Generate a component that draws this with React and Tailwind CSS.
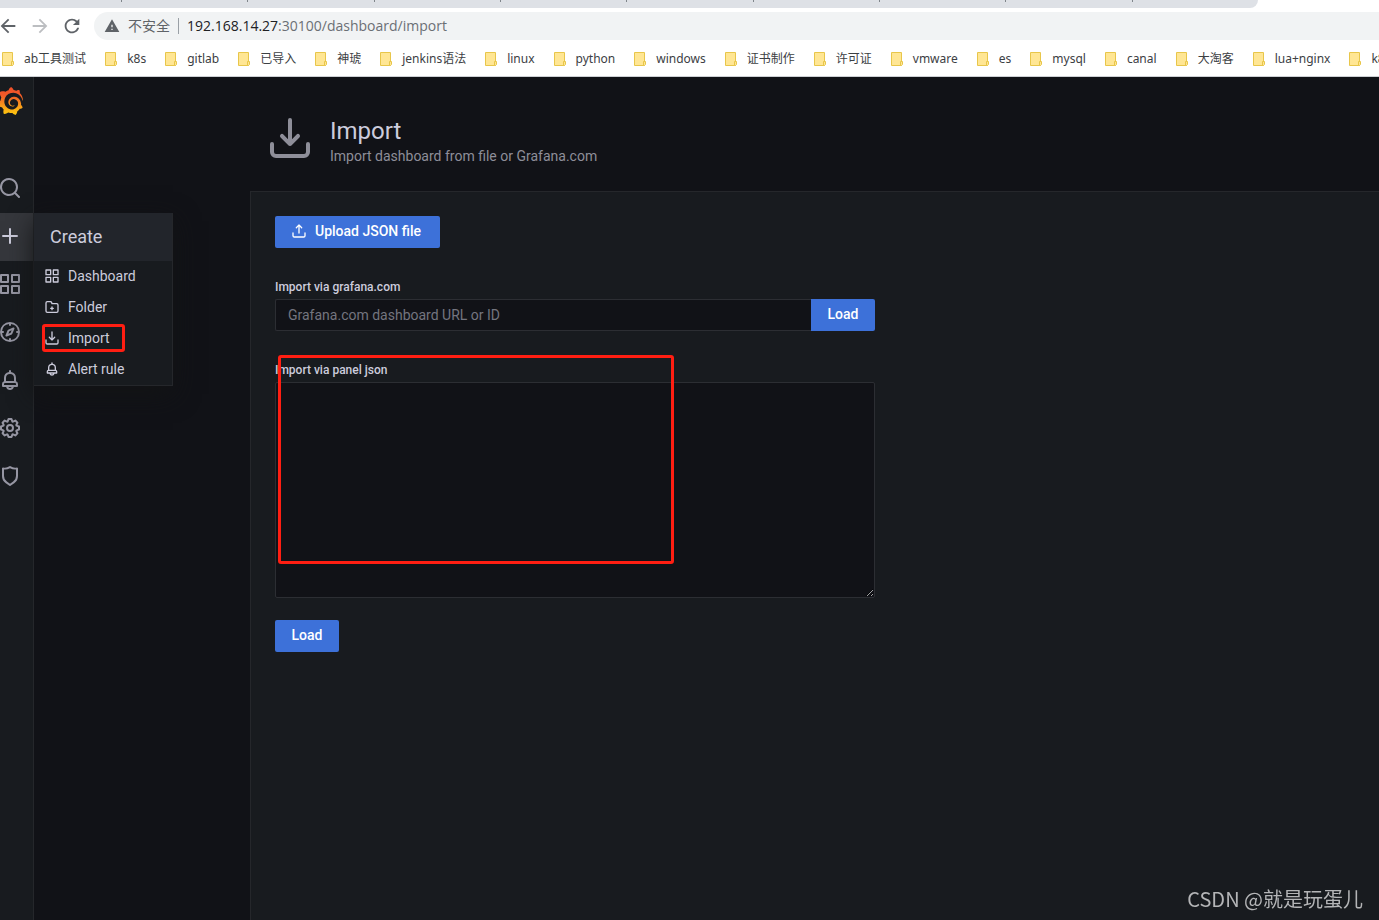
import React from 'react';
import { SiGrafana } from 'react-icons/si';
import { MdArrowBack, MdArrowForward, MdRefresh, MdWarning } from 'react-icons/md';

const paths = {
    search: 'M21.71,20.29,18,16.61A9,9,0,1,0,16.61,18l3.68,3.68a1,1,0,0,0,1.42,0A1,1,0,0,0,21.71,20.29ZM11,18a7,7,0,1,1,7-7A7,7,0,0,1,11,18Z',
    plus: 'M19,11H13V5a1,1,0,0,0-2,0v6H5a1,1,0,0,0,0,2h6v6a1,1,0,0,0,2,0V13h6a1,1,0,0,0,0-2Z',
    apps: 'M10,13H3a1,1,0,0,0-1,1v7a1,1,0,0,0,1,1h7a1,1,0,0,0,1-1V14A1,1,0,0,0,10,13ZM9,20H4V15H9ZM21,2H14a1,1,0,0,0-1,1v7a1,1,0,0,0,1,1h7a1,1,0,0,0,1-1V3A1,1,0,0,0,21,2ZM20,9H15V4h5Zm1,4H14a1,1,0,0,0-1,1v7a1,1,0,0,0,1,1h7a1,1,0,0,0,1-1V14A1,1,0,0,0,21,13Zm-1,7H15V15h5ZM10,2H3A1,1,0,0,0,2,3v7a1,1,0,0,0,1,1h7a1,1,0,0,0,1-1V3A1,1,0,0,0,10,2ZM9,9H4V4H9Z',
    compass: 'M12,2A10,10,0,1,0,22,12,10,10,0,0,0,12,2Zm1,17.93V19a1,1,0,0,0-2,0v.93A8,8,0,0,1,4.07,13H5a1,1,0,0,0,0-2H4.07A8,8,0,0,1,11,4.07V5a1,1,0,0,0,2,0V4.07A8,8,0,0,1,19.93,11H19a1,1,0,0,0,0,2h.93A8,8,0,0,1,13,19.93ZM15.14,7.55l-5,2.12a1,1,0,0,0-.52.52l-2.12,5a1,1,0,0,0,.21,1.1,1,1,0,0,0,.7.3.93.93,0,0,0,.4-.09l5-2.12a1,1,0,0,0,.52-.52l2.12-5a1,1,0,0,0-1.31-1.31Zm-2.49,5.1-2.28,1,1-2.28,2.28-1Z',
    bell: 'M18,13.18V10a6,6,0,0,0-5-5.91V3a1,1,0,0,0-2,0V4.09A6,6,0,0,0,6,10v3.18A3,3,0,0,0,4,16v2a1,1,0,0,0,1,1H8.14a4,4,0,0,0,7.72,0H19a1,1,0,0,0,1-1V16A3,3,0,0,0,18,13.18ZM8,10a4,4,0,0,1,8,0v3H8Zm4,10a2,2,0,0,1-1.72-1h3.44A2,2,0,0,1,12,20Zm6-3H6V16a1,1,0,0,1,1-1H17a1,1,0,0,1,1,1Z',
    cog: 'M21.32,9.55l-1.89-.63.89-1.78A1,1,0,0,0,20.13,6L18,3.87a1,1,0,0,0-1.15-.19l-1.78.89-.63-1.89A1,1,0,0,0,13.5,2h-3a1,1,0,0,0-.95.68L8.92,4.57,7.14,3.68A1,1,0,0,0,6,3.87L3.87,6a1,1,0,0,0-.19,1.15l.89,1.78-1.89.63A1,1,0,0,0,2,10.5v3a1,1,0,0,0,.68.95l1.89.63-.89,1.78A1,1,0,0,0,3.87,18L6,20.13a1,1,0,0,0,1.15.19l1.78-.89.63,1.89a1,1,0,0,0,.95.68h3a1,1,0,0,0,.95-.68l.63-1.89,1.78.89A1,1,0,0,0,18,20.13L20.13,18a1,1,0,0,0,.19-1.15l-.89-1.78,1.89-.63A1,1,0,0,0,22,13.5v-3A1,1,0,0,0,21.32,9.55ZM20,12.78l-1.2.4A2,2,0,0,0,17.64,16l.57,1.14-1.1,1.1L16,17.64a2,2,0,0,0-2.79,1.16l-.4,1.2H11.22l-.4-1.2A2,2,0,0,0,8,17.64l-1.14.57-1.1-1.1L6.36,16A2,2,0,0,0,5.2,13.18L4,12.78V11.22l1.2-.4A2,2,0,0,0,6.36,8L5.79,6.89l1.1-1.1L8,6.36A2,2,0,0,0,10.82,5.2l.4-1.2h1.56l.4,1.2A2,2,0,0,0,16,6.36l1.14-.57,1.1,1.1L17.64,8a2,2,0,0,0,1.16,2.79l1.2.4ZM12,8a4,4,0,1,0,4,4A4,4,0,0,0,12,8Zm0,6a2,2,0,1,1,2-2A2,2,0,0,1,12,14Z',
    shield: 'M19.63,3.65a1,1,0,0,0-.84-.2,8,8,0,0,1-6.22-1.27,1,1,0,0,0-1.14,0A8,8,0,0,1,5.21,3.45a1,1,0,0,0-.84.2A1,1,0,0,0,4,4.43v7.45a9,9,0,0,0,3.77,7.33l3.65,2.6a1,1,0,0,0,1.16,0l3.65-2.6A9,9,0,0,0,20,11.88V4.43A1,1,0,0,0,19.63,3.65ZM18,11.88a7,7,0,0,1-2.93,5.7L12,19.77,8.93,17.58A7,7,0,0,1,6,11.88V5.58a10,10,0,0,0,6-1.39,10,10,0,0,0,6,1.39Z',
    folder: 'M14,13H13V12a1,1,0,0,0-2,0v1H10a1,1,0,0,0,0,2h1v1a1,1,0,0,0,2,0V15h1a1,1,0,0,0,0-2Zm5-7H12.72l-.32-1a3,3,0,0,0-2.84-2H5A3,3,0,0,0,2,6V18a3,3,0,0,0,3,3H19a3,3,0,0,0,3-3V9A3,3,0,0,0,19,6Zm1,12a1,1,0,0,1-1,1H5a1,1,0,0,1-1-1V6A1,1,0,0,1,5,5H9.56a1,1,0,0,1,.95.68l.54,1.64A1,1,0,0,0,12,8h7a1,1,0,0,1,1,1Z',
    import: 'M21,14a1,1,0,0,0-1,1v4a1,1,0,0,1-1,1H5a1,1,0,0,1-1-1V15a1,1,0,0,0-2,0v4a3,3,0,0,0,3,3H19a3,3,0,0,0,3-3V15A1,1,0,0,0,21,14Zm-9.71,1.71a1,1,0,0,0,.33.21.94.94,0,0,0,.76,0,1,1,0,0,0,.33-.21l4-4a1,1,0,0,0-1.42-1.42L13,12.59V3a1,1,0,0,0-2,0v9.59l-2.29-2.3a1,1,0,1,0-1.42,1.42Z',
    upload: 'M8.71,7.71,11,5.41V15a1,1,0,0,0,2,0V5.41l2.29,2.3a1,1,0,0,0,1.42,0,1,1,0,0,0,0-1.42l-4-4a1,1,0,0,0-.33-.21,1,1,0,0,0-.76,0,1,1,0,0,0-.33.21l-4,4A1,1,0,1,0,8.71,7.71ZM21,14a1,1,0,0,0-1,1v4a1,1,0,0,1-1,1H5a1,1,0,0,1-1-1V15a1,1,0,0,0-2,0v4a3,3,0,0,0,3,3H19a3,3,0,0,0,3-3V15A1,1,0,0,0,21,14Z',
};

const Icon = ({ name, size = 24 }) => (
    <svg width={size} height={size} viewBox="0 0 24 24" fill="currentColor" className="shrink-0" aria-hidden="true">
        <path d={paths[name]} />
    </svg>
);

const bookmarks = [
    'ab工具测试', 'k8s', 'gitlab', '已导入', '神琥', 'jenkins语法', 'linux', 'python', 'windows',
    '证书制作', '许可证', 'vmware', 'es', 'mysql', 'canal', '大淘客', 'lua+nginx', 'k8s',
];

const createItems = [
    { icon: 'apps', label: 'Dashboard' },
    { icon: 'folder', label: 'Folder' },
    { icon: 'import', label: 'Import', marked: true },
    { icon: 'bell', label: 'Alert rule' },
];

const BookmarkFolder = () => (
    <svg width="12" height="14" viewBox="0 0 12 14" className="shrink-0" aria-hidden="true">
        <path d="M.5.5h10v13H.5z" fill="#ffe694" stroke="#e8c64a" />
        <path d="M9.5 9.5h2v3l-1 1h-1z" fill="#ffe694" stroke="#e8c64a" />
    </svg>
);

const BrowserBar = () => (
    <header className="h-[77px] overflow-hidden bg-white border-b border-[#cdd0d4] font-['Open_Sans','Noto_Sans_CJK_SC',sans-serif]">
        <div className="flex h-2 w-[1258px] rounded-br-lg bg-[#dee1e6]">
            <span className="h-[2px] w-[122px] border-r border-[#80868b]" />
            {[1, 2, 3, 4, 5, 6, 7, 8].map((tab) => (
                <span key={tab} className="h-[2px] flex-1 border-r border-[#80868b]" />
            ))}
            <span className="flex-1" />
        </div>
        <div className="flex h-9 items-center">
            <div className="flex w-[94px] shrink-0 items-center gap-[10px] text-[#5f6368]">
                <button type="button" aria-label="Back" className="-ml-[3px]"><MdArrowBack size={22} /></button>
                <button type="button" aria-label="Forward" className="text-[#bcbec1]"><MdArrowForward size={22} /></button>
                <button type="button" aria-label="Reload"><MdRefresh size={22} /></button>
            </div>
            <div className="flex h-7 flex-1 items-center rounded-l-full bg-[#f1f3f4] pl-[10px] text-[#5f6368]">
                <MdWarning size={16} />
                <span className="ml-2 text-sm whitespace-nowrap">不安全</span>
                <span className="mx-2 h-4 w-px shrink-0 bg-[#9aa0a6]" />
                <span className="text-sm whitespace-nowrap text-[#6b6f74]">
                    <span className="text-[#202124]">192.168.14.27</span>:30100/dashboard/import
                </span>
            </div>
        </div>
        <nav className="flex h-[29px] items-center gap-[19px] pl-[2px] font-['Noto_Sans','Noto_Sans_CJK_SC',sans-serif] text-xs text-[#3c4043]">
            {bookmarks.map((name, i) => (
                <a key={i} href="#" className="flex shrink-0 items-center gap-[10px] whitespace-nowrap">
                    <BookmarkFolder />
                    {name}
                </a>
            ))}
        </nav>
    </header>
);

const CreateMenu = () => (
    <div className="absolute left-[34px] top-0 z-10 w-[139px] border-r border-b border-[#25272b] bg-[#181b1f] text-[#ccccdc] shadow-[0_8px_24px_#131415]">
        <div className="flex h-12 items-center bg-[#22252b] px-4 text-lg">Create</div>
        <ul>
            {createItems.map((item) => (
                <li key={item.label} className="relative">
                    <a href="#" className="flex h-[31px] items-center gap-2 pb-[2px] pl-[10px] text-sm">
                        <Icon name={item.icon} size={16} />
                        {item.label}
                    </a>
                    {item.marked && (
                        <span className="pointer-events-none absolute top-[1px] left-2 h-7 w-[83px] rounded-[3px] border-3 border-[#ff1e12]" />
                    )}
                </li>
            ))}
        </ul>
    </div>
);

const SideButton = ({ name, label }) => (
    <button type="button" aria-label={label} className="flex h-12 w-5 items-center justify-center pb-[2px]">
        <Icon name={name} />
    </button>
);

const Sidebar = () => (
    <aside className="w-[34px] shrink-0 border-r border-[#25272b] bg-[#181b1f] text-[#9696a3]">
        <a href="#" aria-label="Home" className="mb-10 flex h-12 w-5 items-center justify-center">
            <svg width="0" height="0" className="absolute">
                <linearGradient id="flame" x1="0" y1="1" x2="0" y2="0">
                    <stop offset="0" stopColor="#fcc80e" />
                    <stop offset="0.2" stopColor="#fbb016" />
                    <stop offset="0.7" stopColor="#f05a28" />
                    <stop offset="1" stopColor="#f0502a" />
                </linearGradient>
            </svg>
            <SiGrafana size={28} fill="url(#flame)" stroke="none" className="shrink-0" />
        </a>
        <SideButton name="search" label="Search" />
        <div className="relative bg-[#35373c] text-[#ccccdc]">
            <SideButton name="plus" label="Create" />
            <CreateMenu />
        </div>
        <SideButton name="apps" label="Dashboards" />
        <SideButton name="compass" label="Explore" />
        <SideButton name="bell" label="Alerting" />
        <SideButton name="cog" label="Configuration" />
        <SideButton name="shield" label="Server Admin" />
    </aside>
);

const ImportForm = () => (
    <form className="max-w-[600px]" onSubmit={(e) => e.preventDefault()}>
        <button type="button" className="flex h-8 w-[165px] items-center gap-2 rounded-[2px] bg-[#3d71d9] px-4 pb-[2px] text-sm font-medium text-white">
            <Icon name="upload" size={16} />
            Upload JSON file
        </button>

        <label htmlFor="gcom" className="mt-[31px] mb-1 block text-xs font-medium">Import via grafana.com</label>
        <div className="flex">
            <input
                id="gcom"
                type="text"
                placeholder="Grafana.com dashboard URL or ID"
                className="h-8 min-w-0 flex-1 rounded-l-[2px] border border-r-0 border-[#2c2e33] bg-[#111217] px-3 text-sm outline-none placeholder:text-[#74757f]"
            />
            <button type="submit" className="h-8 w-16 rounded-r-[2px] bg-[#3d71d9] pb-[2px] text-sm font-medium text-white">Load</button>
        </div>

        <div className="relative mt-[31px]">
            <label htmlFor="json" className="mb-1 block text-xs font-medium">Import via panel json</label>
            <textarea
                id="json"
                className="block h-[216px] w-full rounded-[2px] border border-[#2c2e33] bg-[#111217] p-2 text-sm outline-none"
            />
            <span className="pointer-events-none absolute -top-[7px] left-[3px] h-[209px] w-[396px] rounded-[3px] border-3 border-[#ff1e12]" />
        </div>
        <button type="submit" className="mt-[22px] h-8 w-16 rounded-[2px] bg-[#3d71d9] pb-[2px] text-sm font-medium text-white">Load</button>
    </form>
);

const App = () => {
    return (
        <div className="flex min-h-screen flex-col bg-[#111217] font-[Roboto,sans-serif] text-[#ccccdc]">
            <BrowserBar />
            <div className="flex flex-1">
                <Sidebar />
                <main className="flex flex-1 flex-col pl-[216px]">
                    <div className="flex h-[114px] items-start gap-4 pt-[37px] pl-4">
                        <span className="text-[#8e8e99]"><Icon name="import" size={48} /></span>
                        <div className="pt-[3px]">
                            <h1 className="text-2xl leading-7">Import</h1>
                            <p className="text-sm leading-[22px] text-[#8e8e99]">Import dashboard from file or Grafana.com</p>
                        </div>
                    </div>
                    <section className="flex-1 border-t border-l border-[#25272b] bg-[#181b1f] p-6">
                        <ImportForm />
                    </section>
                </main>
            </div>
            <div className="fixed right-4 bottom-[7px] font-['Noto_Sans_CJK_SC',sans-serif] text-xl text-[#b4b5b7]">
                CSDN @就是玩蛋儿
            </div>
        </div>
    );
};

export default App;
